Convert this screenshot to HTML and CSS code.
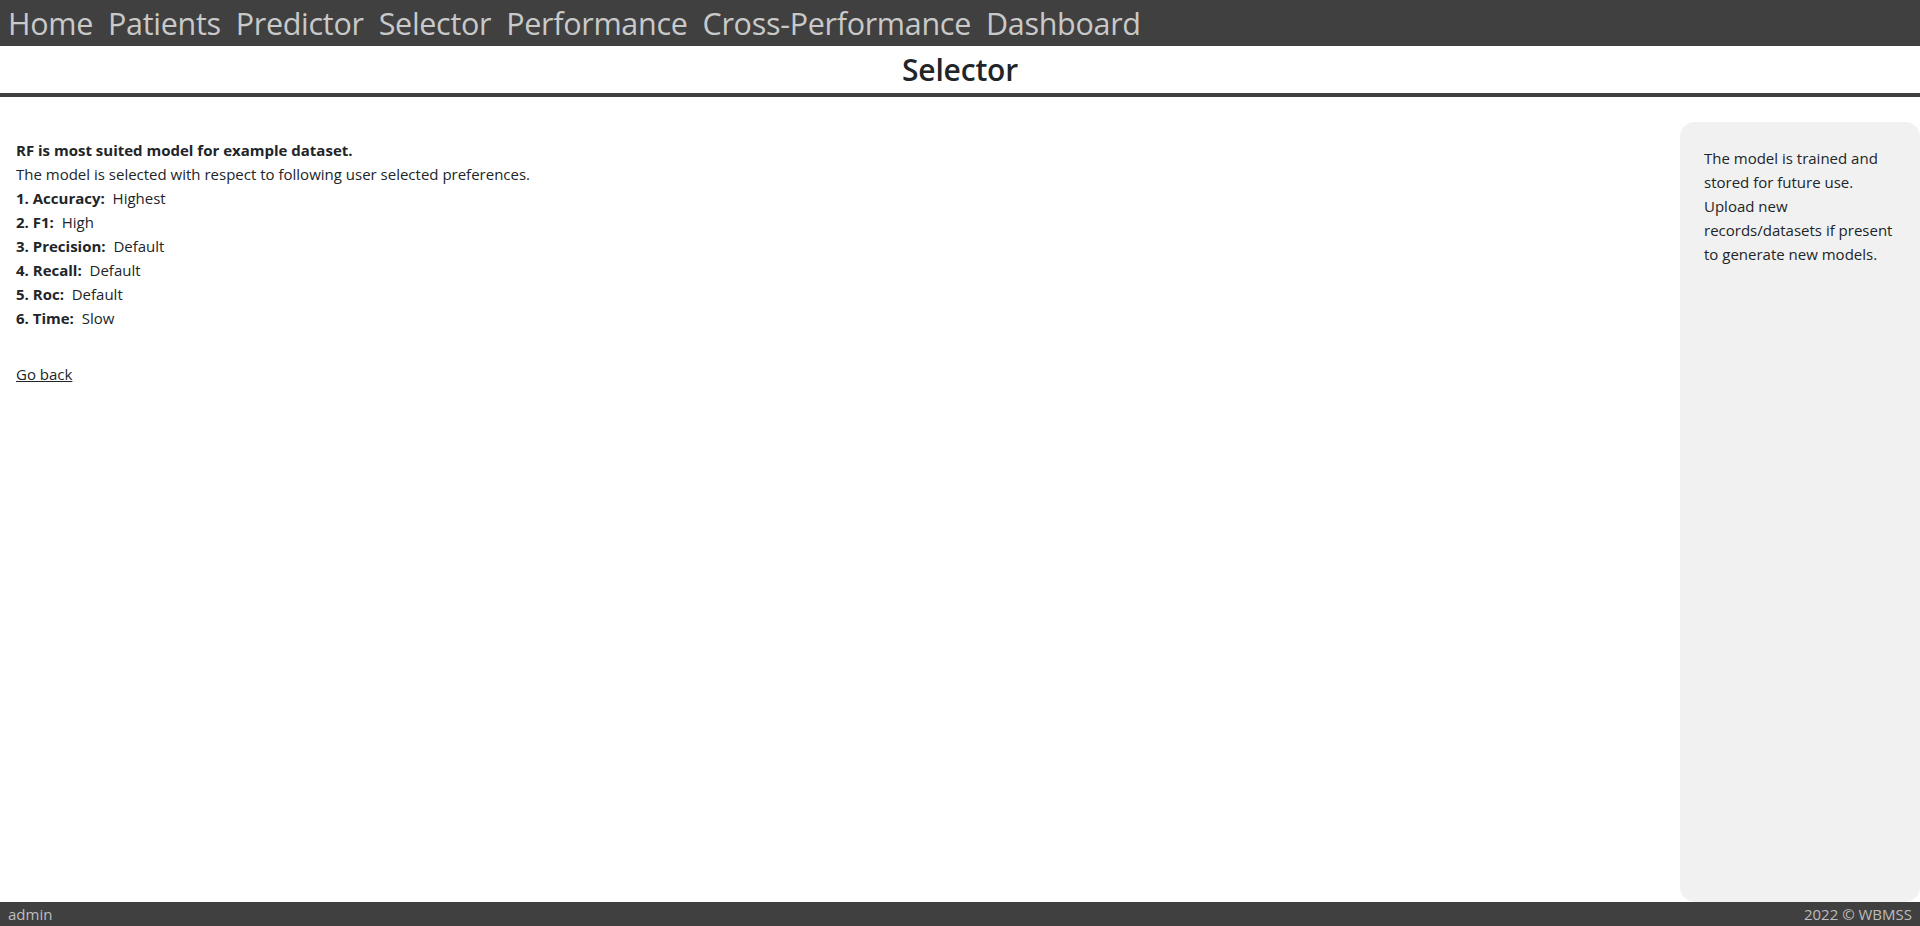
FILE: index.html
```html
<!DOCTYPE html>
<html lang="en">
<head>
<meta charset="utf-8">
<title>Selector</title>
<link rel="stylesheet" href="styles.css">
</head>
<body>
<div class="page">
  <nav class="topnav">
    <a href="#">Home</a>
    <a href="#">Patients</a>
    <a href="#">Predictor</a>
    <a href="#">Selector</a>
    <a href="#">Performance</a>
    <a href="#">Cross-Performance</a>
    <a href="#">Dashboard</a>
  </nav>
  <header class="title-bar">
    <h1>Selector</h1>
  </header>
  <div class="main">
    <section class="content">
      <p class="lead">RF is most suited model for example dataset.</p>
      <p>The model is selected with respect to following user selected preferences.</p>
      <p><b>1. Accuracy:</b>&nbsp; Highest</p>
      <p><b>2. F1:</b>&nbsp; High</p>
      <p><b>3. Precision:</b>&nbsp; Default</p>
      <p><b>4. Recall:</b>&nbsp; Default</p>
      <p><b>5. Roc:</b>&nbsp; Default</p>
      <p><b>6. Time:</b>&nbsp; Slow</p>
      <a class="back" href="#">Go back</a>
    </section>
    <aside class="side">
      <p>The model is trained and stored for future use. Upload new records/datasets if present to generate new models.</p>
    </aside>
  </div>
  <footer class="footer">
    <span>admin</span>
    <span>2022 © WBMSS</span>
  </footer>
</div>
</body>
</html>
```
FILE: styles.css
```css
html, body {
  margin: 0;
  padding: 0;
  height: 100%;
}
body {
  font-family: "Open Sans", "Noto Sans", "DejaVu Sans", sans-serif;
  color: #212529;
  background: #ffffff;
}
.page {
  display: flex;
  flex-direction: column;
  height: 100vh;
}
.topnav {
  height: 46px;
  background: #404040;
  display: flex;
  align-items: center;
  padding-left: 8px;
  gap: 15px;
  flex-shrink: 0;
}
.topnav a {
  color: #c9c9c9;
  text-decoration: none;
  font-size: 30.5px;
  line-height: 46px;
  letter-spacing: -0.3px;
}
.title-bar {
  height: 47px;
  border-bottom: 4px solid #404040;
  display: flex;
  align-items: center;
  justify-content: center;
  flex-shrink: 0;
}
.title-bar h1 {
  margin: 0;
  font-size: 30px;
  font-weight: 600;
  color: #212529;
  letter-spacing: -0.2px;
}
.main {
  flex: 1;
  display: flex;
  min-height: 0;
}
.content {
  flex: 1;
  padding: 41px 16px 0 16px;
  font-size: 15px;
  line-height: 24px;
}
.content p {
  margin: 0;
}
.content b, .content .lead {
  font-weight: 700;
}
.back {
  display: inline-block;
  margin-top: 32px;
  color: #212529;
  text-decoration: underline;
}
.side {
  width: 240px;
  margin-top: 25px;
  background: #f1f1f1;
  border-radius: 15px;
  padding: 24px 22px 0 24px;
  box-sizing: border-box;
  font-size: 15px;
  line-height: 24px;
}
.side p {
  margin: 0;
}
.footer {
  height: 24px;
  background: #404040;
  color: #bdbdbd;
  display: flex;
  justify-content: space-between;
  align-items: center;
  padding: 0 8px;
  font-size: 15px;
  flex-shrink: 0;
}
```
